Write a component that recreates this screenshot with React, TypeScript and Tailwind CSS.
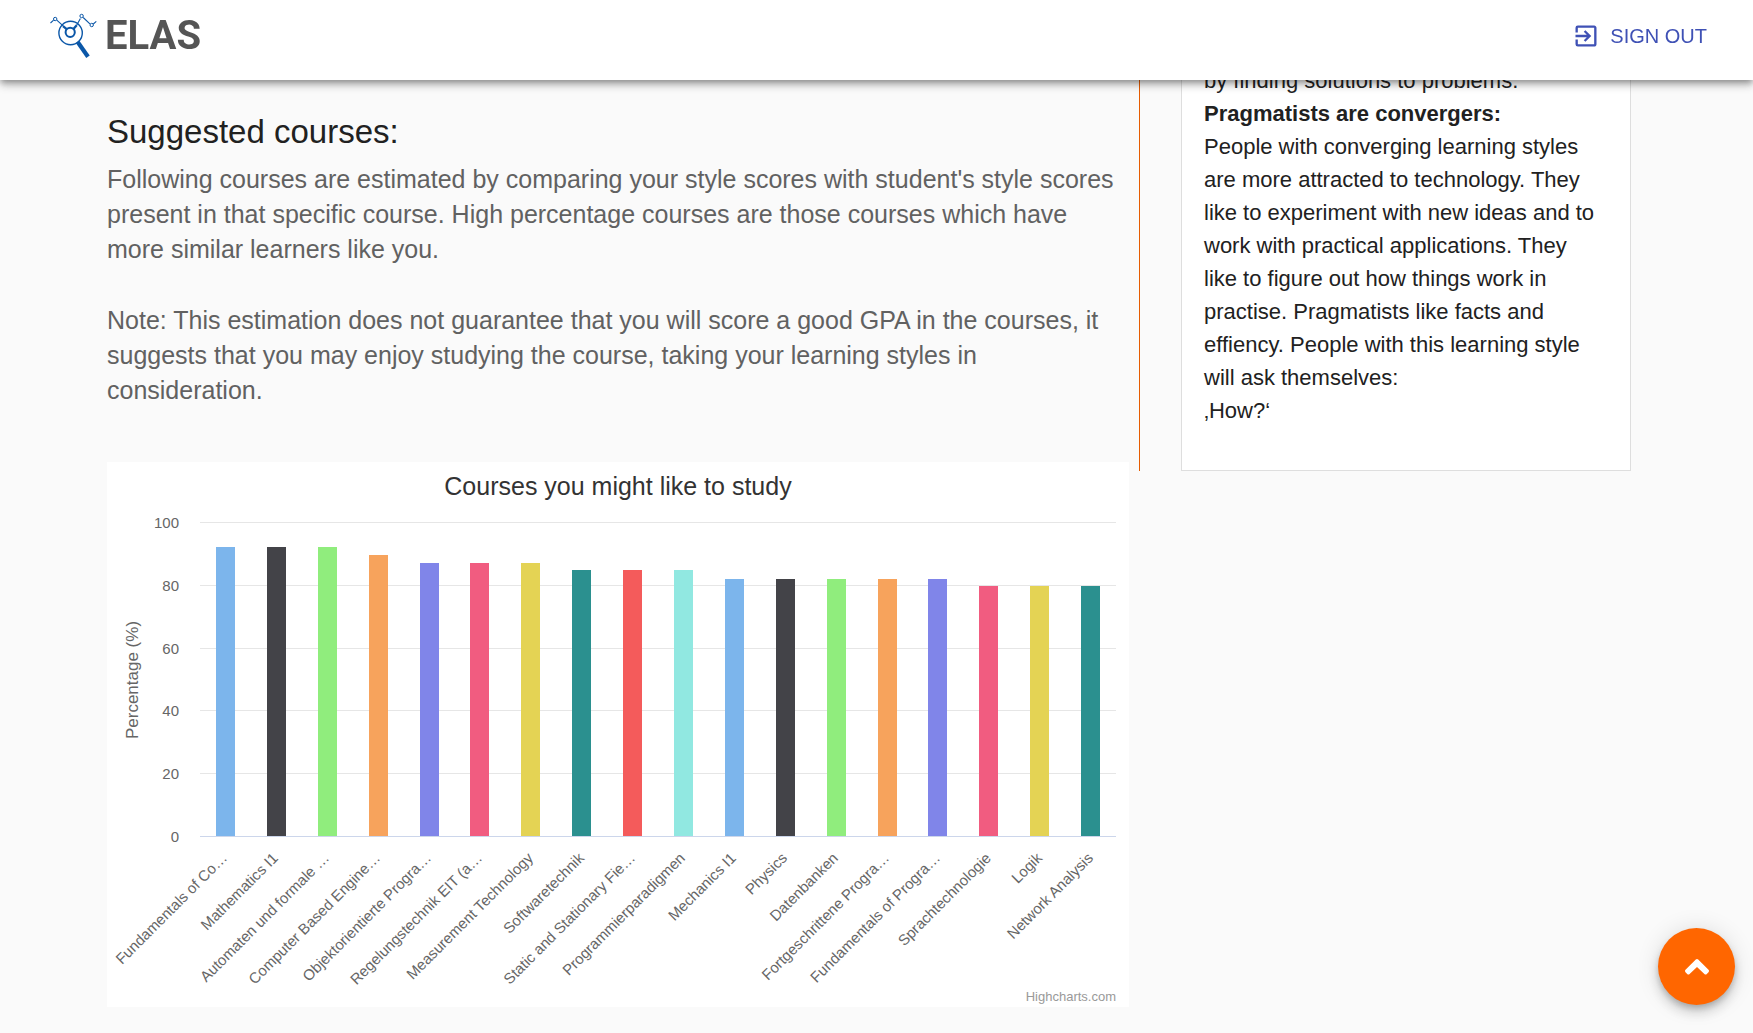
import React from "react";
import { MdExitToApp } from "react-icons/md";

const PALETTE = [
  "#7cb5ec", "#434348", "#90ed7d", "#f7a35c", "#8085e9",
  "#f15c80", "#e4d354", "#2b908f", "#f45b5b", "#91e8e1",
];

const COURSES: { name: string; value: number }[] = [
  { name: "Fundamentals of Co…", value: 92 },
  { name: "Mathematics I1", value: 92 },
  { name: "Automaten und formale …", value: 92 },
  { name: "Computer Based Engine…", value: 89.5 },
  { name: "Objektorientierte Progra…", value: 87 },
  { name: "Regelungstechnik EIT (a…", value: 87 },
  { name: "Measurement Technology", value: 87 },
  { name: "Softwaretechnik", value: 84.8 },
  { name: "Static and Stationary Fie…", value: 84.8 },
  { name: "Programmierparadigmen", value: 84.8 },
  { name: "Mechanics I1", value: 82 },
  { name: "Physics", value: 82 },
  { name: "Datenbanken", value: 82 },
  { name: "Fortgeschrittene Progra…", value: 82 },
  { name: "Fundamentals of Progra…", value: 82 },
  { name: "Sprachtechnologie", value: 79.5 },
  { name: "Logik", value: 79.5 },
  { name: "Network Analysis", value: 79.5 },
];

const PLOT = { left: 93, right: 1009, top: 60, bottom: 374 };
const STEP = (PLOT.right - PLOT.left) / COURSES.length;
const yFor = (v: number) =>
  Math.round(PLOT.bottom - (v / 100) * (PLOT.bottom - PLOT.top));

function CourseChart() {
  return (
    <svg
      viewBox="0 0 1022 545"
      role="img"
      aria-label="Courses you might like to study"
      className="block h-auto w-full bg-white"
    >
      <text x="511" y="33" textAnchor="middle" fill="#333333" className="text-[25px]">
        Courses you might like to study
      </text>
      {[0, 20, 40, 60, 80, 100].map((t) => (
        <g key={t}>
          <rect
            x={PLOT.left}
            y={yFor(t)}
            width={PLOT.right - PLOT.left}
            height="1"
            fill={t === 0 ? "#ccd6eb" : "#e6e6e6"}
          />
          <text x="72" y={yFor(t) + 6} textAnchor="end" fill="#666666" className="text-[15px]">
            {t}
          </text>
        </g>
      ))}
      <text
        transform="translate(31 218) rotate(-90)"
        textAnchor="middle"
        fill="#666666"
        className="text-[17px]"
      >
        Percentage (%)
      </text>
      {COURSES.map((c, i) => {
        const center = PLOT.left + STEP * (i + 0.5);
        const y = yFor(c.value);
        return (
          <g key={c.name}>
            <rect
              x={Math.round(center - 9.5)}
              y={y}
              width="19"
              height={PLOT.bottom - y}
              fill={PALETTE[i % PALETTE.length]}
            />
            <text
              transform={`translate(${Math.round(center + 3)} 397) rotate(-45)`}
              textAnchor="end"
              fill="#666666"
              className="text-[15px]"
            >
              {c.name}
            </text>
          </g>
        );
      })}
      <text x="1009" y="539" textAnchor="end" fill="#999999" className="text-[13px]">
        Highcharts.com
      </text>
    </svg>
  );
}

function Logo() {
  return (
    <a href="#" aria-label="ELAS" className="flex items-center gap-[7px]">
      <svg viewBox="0 0 48 48" className="size-12" fill="none" stroke="#0b57a8">
        <path d="M0.5 11 3.600 8.200M6.800 8.200l6.600 6M26.500 13.500l3.900-7M33.200 5.500l6.700 6.300M43.300 12l3-2.600" strokeWidth="1.100" />
        <circle cx="5.200" cy="7" r="1.700" strokeWidth="1" />
        <circle cx="31.600" cy="4" r="1.700" strokeWidth="1" />
        <circle cx="41.700" cy="13" r="1.700" strokeWidth="1" />
        <circle cx="20.600" cy="21" r="11.700" strokeWidth="1.400" />
        <circle cx="20.200" cy="20.300" r="4.600" strokeWidth="2" />
        <path d="M13 14.200l4 3.200M23.200 17.200l3.500-4" strokeWidth="2.300" />
        <path d="M27.500 29.800l10.500 15" strokeWidth="4.200" />
      </svg>
      <span className="font-[Roboto,sans-serif] text-[40px] leading-12 font-bold text-[#555555]">
        ELAS
      </span>
    </a>
  );
}

export default function App() {
  return (
    <div className="h-screen overflow-hidden bg-[#fafafa] font-['Liberation_Sans',Arial,sans-serif] text-[#212121]">
      <header className="fixed inset-x-0 top-0 z-10 flex h-20 items-start justify-between bg-white pt-3 pr-[46px] pl-[50px] shadow-[0_3px_6px_-1px_rgba(0,0,0,0.3),0_6px_8px_rgba(0,0,0,0.16),0_1px_14px_rgba(0,0,0,0.12)]">
        <Logo />
        <button
          type="button"
          className="flex h-12 items-center gap-[10px] text-[20px] text-[#3f51b5]"
        >
          <MdExitToApp className="size-7" />
          SIGN OUT
        </button>
      </header>

      <main className="grid grid-cols-[1022fr_492fr] items-start gap-[10px] pr-[122px] pl-[107px]">
        <section className="pt-[108px]">
          <h1 className="text-[33px] leading-12">Suggested courses:</h1>
          <p className="mt-[6px] text-[25px] leading-[35px] text-[#616161]">
            Following courses are estimated by comparing your style scores with student's style
            scores present in that specific course. High percentage courses are those courses which
            have more similar learners like you.
          </p>
          <p className="mt-9 mb-[54px] text-[25px] leading-[35px] text-[#616161]">
            Note: This estimation does not guarantee that you will score a good GPA in the courses,
            it suggests that you may enjoy studying the course, taking your learning styles in
            consideration.
          </p>
          <CourseChart />
        </section>

        <aside className="border-l border-[#e65c00] pl-[41px]">
          <div className="border border-[#dedede] bg-white pt-[63px] pr-7 pb-[43px] pl-[22px] text-[22px] leading-[33px]">
            <p>by finding solutions to problems.</p>
            <h2 className="font-bold">Pragmatists are convergers:</h2>
            <p>
              People with converging learning styles are more attracted to technology. They like to
              experiment with new ideas and to work with practical applications. They like to figure
              out how things work in practise. Pragmatists like facts and effiency. People with this
              learning style will ask themselves:
              <br />
              ‚How?‘
            </p>
          </div>
        </aside>
      </main>

      <button
        type="button"
        aria-label="Back to top"
        className="fixed right-[18px] bottom-[28px] flex size-[77px] items-center justify-center rounded-full bg-[#ff6600] shadow-[0_4px_6px_-1px_rgba(0,0,0,0.2),0_8px_13px_rgba(0,0,0,0.14),0_1px_23px_rgba(0,0,0,0.12)]"
      >
        <svg viewBox="0 0 24 16" className="h-4 w-6" fill="#ffffff">
          <path d="M10.800 0.500q1.200-1 2.400 0L23.500 10.800q1 1.200 0 2.400L21.800 15q-1.200 1-2.400 0L12 8 4.600 15q-1.200 1-2.400 0L0.500 13.200q-1-1.200 0-2.400Z" />
        </svg>
      </button>
    </div>
  );
}
